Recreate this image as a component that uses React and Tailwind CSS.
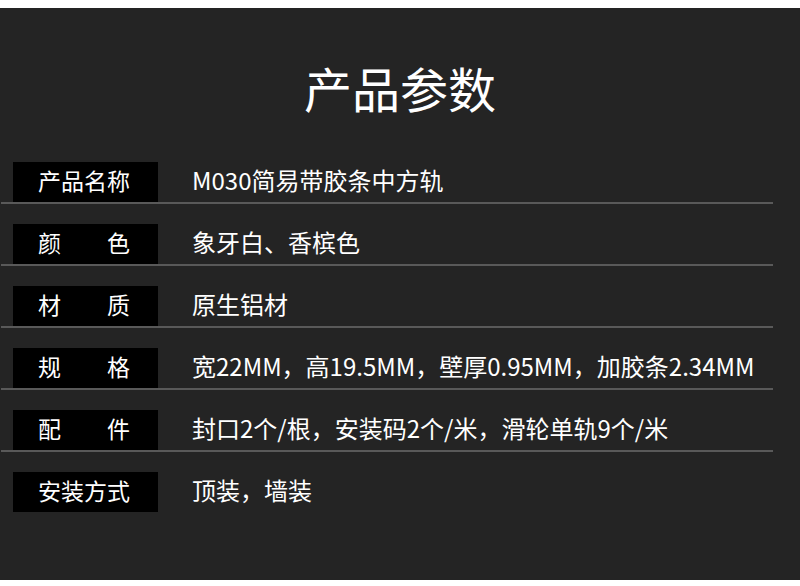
export default function App() {
  const rows = [
    { label: ["产品名称"], value: "M030简易带胶条中方轨" },
    { label: ["颜", "色"], value: "象牙白、香槟色" },
    { label: ["材", "质"], value: "原生铝材" },
    { label: ["规", "格"], value: "宽22MM，高19.5MM，壁厚0.95MM，加胶条2.34MM" },
    { label: ["配", "件"], value: "封口2个/根，安装码2个/米，滑轮单轨9个/米" },
    { label: ["安装方式"], value: "顶装，墙装" },
  ];
  const font = { fontFamily: '"Noto Sans CJK SC", "Noto Sans", sans-serif' };
  return (
    <div className="w-[800px] h-[586px] bg-white pt-[8px]" style={font}>
      <div className="h-[572px] bg-[#242424] flex flex-col">
        <div className="h-[48px] mt-[55px] flex items-center justify-center text-white text-[48px] leading-none">
          产品参数
        </div>
        <div className="mt-[51px] flex flex-col gap-[20px]">
          {rows.map((r, i) => (
            <div
              key={i}
              className={
                "ml-[1px] w-[772px] flex items-center pl-[12px] " +
                (i < rows.length - 1 ? "border-b-2 border-[#595959]" : "")
              }
            >
              <div className="w-[145px] h-[40px] bg-black flex items-center justify-center pb-[4px] pr-[3px]">
                <div
                  className={
                    "w-[92px] flex text-[23px] leading-none text-white " +
                    (r.label.length > 1 ? "justify-between" : "justify-center")
                  }
                >
                  {r.label.map((l, j) => (
                    <span key={j}>{l}</span>
                  ))}
                </div>
              </div>
              <div className="ml-[34px] pb-[4px] text-[24px] leading-none text-white whitespace-nowrap">
                {r.value}
              </div>
            </div>
          ))}
        </div>
      </div>
    </div>
  );
}
